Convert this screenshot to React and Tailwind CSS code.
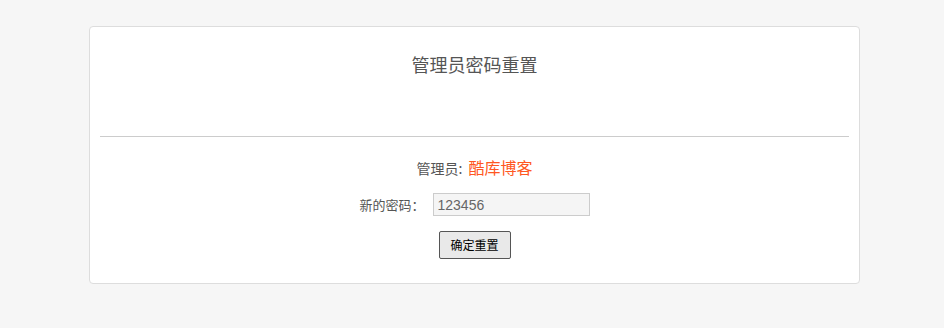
import React from "react";

export default function App() {
  return (
    <div className="min-h-[328px] w-[944px] bg-[#f6f6f6] pt-[26px]" style={{ fontFamily: '"Noto Sans CJK SC", "Noto Sans", sans-serif' }}>
      <div className="ml-[89px] w-[771px] rounded-[4px] border border-[#dddddd] bg-white pb-[24px]">
        <div className="pt-[25px] text-center text-[18px] leading-[24px] text-[#555555]">管理员密码重置</div>
        <div className="mx-[10px] mt-[60px] h-px bg-[#cccccc]" />
        <div className="mt-[18px] flex items-baseline justify-center leading-[24px]">
          <span className="text-[14px] text-[#555555]">管理员:</span>
          <span className="ml-[6px] text-[16px] text-[#ff5722]">酷库博客</span>
        </div>
        <div className="mt-[13px] flex items-center justify-center">
          <span className="text-[13px] text-[#555555]">新的密码：</span>
          <input
            readOnly
            value="123456"
            className="ml-[8px] h-[23px] w-[157px] border border-[#cccccc] bg-[#f5f5f5] px-[4px] text-[14px] text-[#666666] outline-none"
            style={{ fontFamily: '"Liberation Sans", Arial, sans-serif' }}
          />
        </div>
        <div className="mt-[15px] flex justify-center">
          <button className="h-[28px] w-[72px] rounded-[2px] border border-[#555555] bg-[#e9e9e9] text-[12px] text-black">确定重置</button>
        </div>
      </div>
    </div>
  );
}
